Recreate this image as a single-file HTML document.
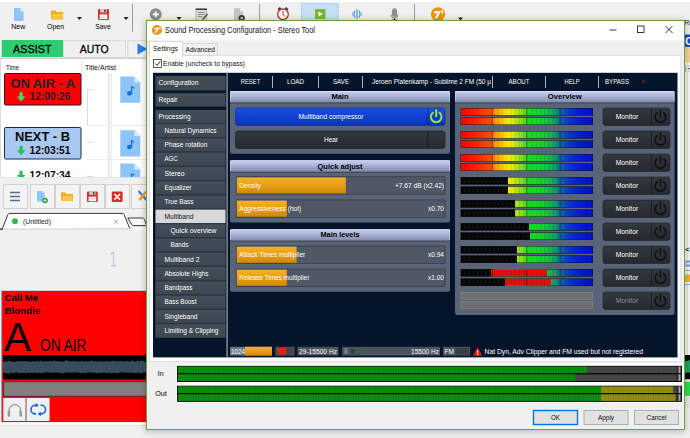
<!DOCTYPE html><html><head><meta charset="utf-8"><title>Sound Processing Configuration - Stereo Tool</title><style>html,body{margin:0;padding:0;background:#f0f0f0;overflow:hidden}svg{display:block;font-family:"Liberation Sans",sans-serif}text{white-space:pre}</style></head><body><svg width="690" height="438" viewBox="0 0 690 438"><defs><linearGradient id="hdr" x1="0" y1="0" x2="0" y2="1"><stop offset="0" stop-color="#c9d1f2"/><stop offset="0.45" stop-color="#aab3d6"/><stop offset="1" stop-color="#7f88a8"/></linearGradient><linearGradient id="blue" x1="0" y1="0" x2="0" y2="1"><stop offset="0" stop-color="#1c50e2"/><stop offset="0.5" stop-color="#0e40d0"/><stop offset="1" stop-color="#0a34b8"/></linearGradient><linearGradient id="dark" x1="0" y1="0" x2="0" y2="1"><stop offset="0" stop-color="#33373f"/><stop offset="1" stop-color="#26292f"/></linearGradient><linearGradient id="org" x1="0" y1="0" x2="0" y2="1"><stop offset="0" stop-color="#f4b22a"/><stop offset="0.5" stop-color="#e89e14"/><stop offset="1" stop-color="#d08808"/></linearGradient><linearGradient id="sbtn" x1="0" y1="0" x2="0" y2="1"><stop offset="0" stop-color="#444f5a"/><stop offset="1" stop-color="#3c4751"/></linearGradient><linearGradient id="meter" gradientUnits="userSpaceOnUse" x1="461" y1="0" x2="592.5" y2="0"><stop offset="0.0" stop-color="#ff0000"/><stop offset="0.1" stop-color="#ff2000"/><stop offset="0.235" stop-color="#ff5400"/><stop offset="0.25" stop-color="#ff9000"/><stop offset="0.345" stop-color="#ffe400"/><stop offset="0.375" stop-color="#f4ec08"/><stop offset="0.41" stop-color="#c4e818"/><stop offset="0.45" stop-color="#90e020"/><stop offset="0.495" stop-color="#5ce020"/><stop offset="0.505" stop-color="#18e020"/><stop offset="0.62" stop-color="#18d030"/><stop offset="0.7" stop-color="#14a860"/><stop offset="0.745" stop-color="#108088"/><stop offset="0.755" stop-color="#1068a8"/><stop offset="0.82" stop-color="#0a38cc"/><stop offset="0.9" stop-color="#061cd8"/><stop offset="1.0" stop-color="#0410c8"/></linearGradient><filter id="sh" x="-5%" y="-5%" width="110%" height="110%"><feGaussianBlur stdDeviation="3.200"/></filter></defs><rect x="0" y="0" width="690" height="438" fill="#f0f0f0"/><rect x="0" y="0" width="690" height="2" fill="#ffffff"/><path d="M14 8h6l3.5 3.5v9.5h-9.5z" fill="#8cc4f6"/><path d="M20 8l3.5 3.5h-3.5z" fill="#c8e4fb"/><text x="18.2" y="28.7" font-size="7.5" fill="#000" text-anchor="middle" textLength="14" lengthAdjust="spacingAndGlyphs">New</text><path d="M51 10.5h4.5l1.2 1.5h6.3v7.5h-12z" fill="#f5a623"/><path d="M52.5 13.5h11l-1.5 6h-11z" fill="#ffc24a"/><text x="55.5" y="28.7" font-size="7.5" fill="#000" text-anchor="middle" textLength="17" lengthAdjust="spacingAndGlyphs">Open</text><path d="M77 17h5l-2.5 3z" fill="#222"/><rect x="98" y="9" width="11" height="11" fill="#e02828" rx="1.2"/><rect x="100.2" y="9" width="6.6" height="3.6" fill="#c8ccd4"/><rect x="104.2" y="9.5" width="1.5" height="2.6" fill="#3a3a44"/><rect x="99.6" y="14.3" width="7.8" height="4.8" fill="#fff"/><rect x="100.6" y="15.6" width="5.8" height="0.7" fill="#c8c8c8"/><rect x="100.6" y="17.1" width="5.8" height="0.7" fill="#c8c8c8"/><text x="103" y="28.7" font-size="7.5" fill="#000" text-anchor="middle" textLength="15.5" lengthAdjust="spacingAndGlyphs">Save</text><path d="M123.5 17h5l-2.5 3z" fill="#222"/><line x1="132.5" y1="4" x2="132.5" y2="32" stroke="#9a9a9a" stroke-width="1" /><circle cx="155.700" cy="14.300" r="6" fill="#8c8c8c"/><path d="M152.700 14.300h6M155.700 11.300v6" fill="none" stroke="#fff" stroke-width="1.7"/><path d="M176.5 17h5l-2.5 3z" fill="#222"/><rect x="196" y="9" width="10.5" height="11.5" fill="#dcdcdc" stroke="#9a9a9a" stroke-width="0.7"/><rect x="195.7" y="8.5" width="11.2" height="1.5" fill="#3a3a3a"/><path d="M198 12.5h6.5M198 14.5h6.5M198 16.5h4" fill="none" stroke="#7a7a7a" stroke-width="0.8"/><path d="M202.5 19.5l5-5.500" fill="none" stroke="#5a5a5a" stroke-width="1.7"/><path d="M234 8.3h6l3 3v9h-9z" fill="#c4c4c4"/><path d="M240 8.3l3 3h-3z" fill="#eeeeee"/><circle cx="241.700" cy="18.200" r="3.100" fill="#333"/><path d="M240.400 16.900l2.600 2.600M243 16.900l-2.600 2.600" fill="none" stroke="#fff" stroke-width="0.9"/><line x1="259.6" y1="4" x2="259.6" y2="32" stroke="#9a9a9a" stroke-width="1" /><path d="M278.300 9.800l2.200-2.200M287.700 9.800l-2.200-2.200" fill="none" stroke="#333" stroke-width="2"/><circle cx="283" cy="14.300" r="5.300" fill="#fff" stroke="#cc2222" stroke-width="1.300"/><path d="M283 11v3.500l1.800 2" fill="none" stroke="#333" stroke-width="0.9"/><rect x="301.3" y="3.5" width="37" height="36" fill="#c6dff4" stroke="#8fc1ea" stroke-width="1" stroke-dasharray="1.500 1"/><rect x="315" y="9" width="10.5" height="10" fill="#79b82c" rx="0.8"/><path d="M318.500 11.500l4.200 2.500-4.200 2.500z" fill="#fff"/><path d="M357 9.300v9.600" fill="none" stroke="#3f94ea" stroke-width="1.2"/><path d="M355 10.500q-2 3.600 0 7.200M359 10.500q2 3.600 0 7.200" fill="none" stroke="#4a9bec" stroke-width="1.1"/><path d="M353.200 12q-1.300 2.100 0 4.200M360.800 12q1.300 2.100 0 4.200" fill="none" stroke="#6aaef0" stroke-width="1"/><rect x="392" y="8.3" width="5" height="8.7" fill="#8e8e8e" rx="2.5"/><path d="M391 14.500a3.500 3.500 0 0 0 7 0" fill="none" stroke="#6a6a6a" stroke-width="0.8"/><path d="M394.500 18v2M391.500 20h6" fill="none" stroke="#333" stroke-width="1"/><line x1="414.5" y1="4" x2="414.5" y2="32" stroke="#9a9a9a" stroke-width="1" /><circle cx="438" cy="14.200" r="7" fill="#ee920e"/><path d="M434.200 12.200h4.800l-3 6" fill="none" stroke="#fff" stroke-width="2.1"/><path d="M441.700 10.300l0.800 3.200" fill="none" stroke="#fff" stroke-width="1.5"/><path d="M458 17.5h5l-2.5 3z" fill="#222"/><rect x="1.8" y="40" width="61.4" height="17" fill="#2ecc71"/><text x="32.3" y="52.5" font-size="11.7" fill="#000" text-anchor="middle" textLength="38.6" lengthAdjust="spacingAndGlyphs" stroke="#000" stroke-width="0.300">ASSIST</text><rect x="63.5" y="40.5" width="62" height="17" fill="#f0f0f0" stroke="#dadada" stroke-width="1"/><text x="94.2" y="52.5" font-size="11.7" fill="#000" text-anchor="middle" textLength="28.8" lengthAdjust="spacingAndGlyphs" stroke="#000" stroke-width="0.300">AUTO</text><rect x="127.8" y="40.5" width="40" height="17" fill="#f0f0f0" stroke="#dadada" stroke-width="1"/><path d="M137.5 43.5l10 5.5-10 5.5z" fill="#1e80e6"/><rect x="0" y="58.5" width="150" height="1.2" fill="#b0b0b0"/><rect x="1" y="59" width="150" height="118" fill="#ffffff"/><rect x="0" y="59" width="1" height="120" fill="#dcdcdc"/><text x="6" y="70" font-size="7.5" fill="#111" textLength="13" lengthAdjust="spacingAndGlyphs">Time</text><text x="85" y="70" font-size="7.5" fill="#111" textLength="31" lengthAdjust="spacingAndGlyphs">Title/Artist</text><line x1="81.8" y1="60" x2="81.8" y2="73" stroke="#e0e0e0" stroke-width="1" /><rect x="108.5" y="73" width="3.5" height="106" fill="#f1f1f1"/><line x1="108.5" y1="73" x2="108.5" y2="178" stroke="#e6e6e6" stroke-width="1" /><line x1="87" y1="125.5" x2="150" y2="125.5" stroke="#ececec" stroke-width="1" /><line x1="87" y1="159.5" x2="150" y2="159.5" stroke="#ececec" stroke-width="1" /><line x1="87" y1="89.5" x2="93" y2="89.5" stroke="#d8d8d8" stroke-width="1" /><line x1="87" y1="142.5" x2="93" y2="142.5" stroke="#d8d8d8" stroke-width="1" /><line x1="87" y1="176.5" x2="93" y2="176.5" stroke="#d8d8d8" stroke-width="1" /><line x1="87.5" y1="89" x2="87.5" y2="125" stroke="#dcdcdc" stroke-width="1" /><clipPath id="listclip"><rect x="0" y="59" width="150" height="118"/></clipPath><g clip-path="url(#listclip)"><path d="M120.3 76.5h14l6 6v20.3h-20z" fill="#8ec5f7"/><path d="M134.3 76.5l6 6h-6z" fill="#d4eafd"/><ellipse cx="129.6" cy="93.3" rx="2.600" ry="2.300" fill="#1a6fe0"/><path d="M131.6 93.3v-6.300l2.800 1.200" fill="none" stroke="#1a6fe0" stroke-width="1.3"/><path d="M120.3 130.3h14l6 6v20.3h-20z" fill="#8ec5f7"/><path d="M134.3 130.3l6 6h-6z" fill="#d4eafd"/><ellipse cx="129.6" cy="147.10000000000002" rx="2.600" ry="2.300" fill="#1a6fe0"/><path d="M131.6 147.10000000000002v-6.300l2.800 1.200" fill="none" stroke="#1a6fe0" stroke-width="1.3"/><path d="M120.3 163.5h14l6 6v20.3h-20z" fill="#8ec5f7"/><path d="M134.3 163.5l6 6h-6z" fill="#d4eafd"/><ellipse cx="129.6" cy="180.3" rx="2.600" ry="2.300" fill="#1a6fe0"/><path d="M131.6 180.3v-6.300l2.800 1.200" fill="none" stroke="#1a6fe0" stroke-width="1.3"/><rect x="4.5" y="73.5" width="76.5" height="31.5" fill="#ff0000" rx="1.2" stroke="#3a1020" stroke-width="1"/><text x="42.8" y="87.5" font-size="12" fill="#18202e" font-weight="bold" text-anchor="middle" textLength="64.5" lengthAdjust="spacingAndGlyphs">ON AIR - A</text><text x="50" y="100" font-size="10" fill="#18202e" font-weight="bold" text-anchor="middle" textLength="41" lengthAdjust="spacingAndGlyphs">12:00:26</text><path d="M19.500 92.200v4.300h-2.700l4.300 4.900 4.300-4.900h-2.700v-4.300z" fill="#30e07c"/><rect x="4.5" y="127.5" width="76.5" height="31.5" fill="#a9c9f3" rx="1.2" stroke="#1c2c44" stroke-width="1"/><text x="42.5" y="141.2" font-size="12" fill="#0a0a0a" font-weight="bold" text-anchor="middle" textLength="55" lengthAdjust="spacingAndGlyphs">NEXT - B</text><text x="50" y="153.7" font-size="10" fill="#0a0a0a" font-weight="bold" text-anchor="middle" textLength="41" lengthAdjust="spacingAndGlyphs">12:03:51</text><path d="M19.500 146v4.300h-2.700l4.300 4.900 4.300-4.900h-2.700v-4.300z" fill="#22c254"/><text x="50" y="179.2" font-size="10" fill="#0a0a0a" font-weight="bold" text-anchor="middle" textLength="41" lengthAdjust="spacingAndGlyphs">12:07:34</text><path d="M19.400 170.800v4.300h-2.700l4.300 4.900 4.300-4.900h-2.700v-4.300z" fill="#22c254"/></g><rect x="0" y="177" width="150" height="1" fill="#e4e4e4"/><rect x="3.5" y="184.5" width="24" height="24" fill="#f3f3f3" stroke="#d0d0d0" stroke-width="1"/><rect x="30.5" y="184.5" width="24" height="24" fill="#f3f3f3" stroke="#d0d0d0" stroke-width="1"/><rect x="55.5" y="184.5" width="24" height="24" fill="#f3f3f3" stroke="#d0d0d0" stroke-width="1"/><rect x="80.5" y="184.5" width="24" height="24" fill="#f3f3f3" stroke="#d0d0d0" stroke-width="1"/><rect x="105.5" y="184.5" width="24" height="24" fill="#f3f3f3" stroke="#d0d0d0" stroke-width="1"/><rect x="131.5" y="184.5" width="24" height="24" fill="#f3f3f3" stroke="#d0d0d0" stroke-width="1"/><path d="M10 192.5h10M10 196.5h10M10 200.5h10" fill="none" stroke="#5b6b8c" stroke-width="1.4"/><path d="M37 191h5l2.5 2.5v8h-7.5z" fill="#8ec5f7"/><circle cx="45" cy="200.5" r="2.8" fill="#2e9e44"/><path d="M43.6 200.5h2.8M45 199.1v2.8" fill="none" stroke="#fff" stroke-width="0.8"/><path d="M61 192.5h4.5l1 1.5h6.5v7h-12z" fill="#f5a623"/><path d="M62.5 195.5h11l-1.5 5.5h-11z" fill="#ffc24a"/><rect x="87" y="191.5" width="10.8" height="10.5" fill="#e02828" rx="1"/><rect x="89.2" y="191.5" width="6.4" height="3.3" fill="#c8ccd4"/><rect x="93" y="192" width="1.4" height="2.4" fill="#3a3a44"/><rect x="88.6" y="196.6" width="7.6" height="4.6" fill="#fff"/><rect x="89.6" y="198" width="5.6" height="0.7" fill="#c8c8c8"/><rect x="111.8" y="191.5" width="10.8" height="10.5" fill="#e02828" rx="1"/><path d="M114.400 194l5.600 5.600M120 194l-5.600 5.600" fill="none" stroke="#fff" stroke-width="1.7"/><path d="M138.500 191l8 9" fill="none" stroke="#2f7de0" stroke-width="2.2"/><path d="M146 191.500l-6.500 8.500" fill="none" stroke="#f0a020" stroke-width="2.6"/><path d="M-1 229.300l3.300-0.500 5.700-14.400q0.500-1 2-1h112q1.500 0 2 1l5.500 13.500 2 1z" fill="#fff" stroke="#3a3a3a" stroke-width="1"/><rect x="3" y="228.3" width="147" height="1.5" fill="#fbfbfb"/><circle cx="15" cy="221.3" r="3" fill="#2dbe60"/><text x="23" y="224" font-size="7.5" fill="#222" textLength="28" lengthAdjust="spacingAndGlyphs">(Untitled)</text><path d="M114.2 219.8l3.6 3.6M117.8 219.8l-3.6 3.600" fill="none" stroke="#888" stroke-width="0.8"/><path d="M127.800 218h14.700q1.300 0 1.800 1.300l2.400 6.300h-13.300q-1.300 0-1.800-1.300z" fill="#fafafa" stroke="#3a3a3a" stroke-width="1"/><text x="113.3" y="265.6" font-size="20" fill="#a9bbdc" text-anchor="middle" textLength="8" lengthAdjust="spacingAndGlyphs" font-family="DejaVu Sans Light, DejaVu Sans, sans-serif" font-weight="200" stroke="#a9bbdc" stroke-width="0.250">1</text><rect x="1.3" y="290" width="149" height="132.3" fill="#7a8494"/><rect x="1.3" y="290" width="149" height="1" fill="#c8d0d8"/><rect x="2.2" y="291" width="148" height="131" fill="#ff0000"/><rect x="0" y="422.3" width="150" height="2.7" fill="#f9f9f9"/><rect x="0" y="425" width="150" height="0.8" fill="#dedede"/><text x="4.5" y="300.7" font-size="9.3" fill="#000" font-weight="bold" textLength="33.5" lengthAdjust="spacingAndGlyphs">Call Me</text><text x="4.5" y="313.7" font-size="9.3" fill="#000" font-weight="bold" textLength="36" lengthAdjust="spacingAndGlyphs">Blondie</text><text x="4" y="350.8" font-size="40" fill="#000" textLength="27" lengthAdjust="spacingAndGlyphs">A</text><text x="40" y="350.8" font-size="16.3" fill="#000" textLength="46.5" lengthAdjust="spacingAndGlyphs">ON AIR</text><rect x="3" y="355" width="147" height="24.5" fill="#000"/><path d="M3 361.4 L4 361.4 L5 361.5 L6 361.0 L7 361.9 L8 359.9 L9 361.1 L10 361.3 L11 361.4 L12 361.9 L13 361.2 L14 361.7 L15 361.9 L16 361.8 L17 361.0 L18 361.0 L19 361.0 L20 361.7 L21 361.1 L22 361.0 L23 361.9 L24 361.1 L25 361.0 L26 361.7 L27 361.0 L28 361.3 L29 361.5 L30 361.8 L31 361.6 L32 361.8 L33 360.9 L34 361.2 L35 361.1 L36 361.5 L37 361.8 L38 360.1 L39 361.5 L40 361.9 L41 359.8 L42 361.6 L43 361.4 L44 361.0 L45 361.6 L46 361.3 L47 361.3 L48 361.5 L49 361.0 L50 361.6 L51 361.3 L52 360.9 L53 361.6 L54 360.0 L55 361.1 L56 361.3 L57 361.1 L58 361.8 L59 361.0 L60 361.6 L61 361.4 L62 361.5 L63 361.9 L64 360.6 L65 361.2 L66 360.2 L67 359.8 L68 361.5 L69 361.6 L70 360.9 L71 361.2 L72 361.5 L73 360.6 L74 361.0 L75 361.3 L76 361.8 L77 361.6 L78 361.1 L79 361.4 L80 361.8 L81 361.5 L82 360.5 L83 361.2 L84 361.4 L85 361.8 L86 361.1 L87 361.5 L88 361.2 L89 361.1 L90 361.5 L91 360.3 L92 361.3 L93 360.4 L94 361.9 L95 361.0 L96 361.4 L97 361.8 L98 361.1 L99 361.3 L100 361.0 L101 361.4 L102 361.4 L103 361.5 L104 361.8 L105 361.8 L106 361.1 L107 361.1 L108 361.7 L109 361.3 L110 361.6 L111 361.4 L112 359.9 L113 361.5 L114 361.1 L115 360.6 L116 361.4 L117 361.4 L118 361.6 L119 361.6 L120 360.2 L121 361.6 L122 361.5 L123 361.2 L124 361.7 L125 361.6 L126 360.4 L127 360.9 L128 361.1 L129 361.6 L130 361.9 L131 360.7 L132 361.2 L133 360.1 L134 361.5 L135 361.9 L136 361.5 L137 361.1 L138 360.3 L139 361.4 L140 361.6 L141 360.0 L142 361.1 L143 360.4 L144 361.0 L145 361.9 L146 361.6 L147 361.5 L148 359.9 L149 361.3 L150 361.5 L150 372.4 L149 372.7 L148 372.7 L147 372.6 L146 372.2 L145 372.7 L144 372.8 L143 372.2 L142 372.8 L141 374.2 L140 372.9 L139 372.8 L138 372.3 L137 373.0 L136 373.2 L135 373.6 L134 372.2 L133 372.9 L132 373.1 L131 372.6 L130 372.5 L129 372.7 L128 372.5 L127 372.6 L126 372.9 L125 372.4 L124 372.3 L123 372.5 L122 372.2 L121 372.6 L120 372.3 L119 373.0 L118 373.0 L117 373.8 L116 372.9 L115 373.1 L114 372.4 L113 372.6 L112 374.3 L111 372.7 L110 372.2 L109 373.2 L108 372.4 L107 374.1 L106 372.3 L105 372.9 L104 372.5 L103 372.3 L102 373.0 L101 372.8 L100 372.9 L99 373.1 L98 372.5 L97 373.6 L96 373.0 L95 372.4 L94 372.9 L93 372.7 L92 372.6 L91 372.2 L90 372.7 L89 372.2 L88 372.4 L87 372.4 L86 372.9 L85 373.5 L84 372.4 L83 373.1 L82 372.4 L81 373.9 L80 373.1 L79 372.9 L78 372.2 L77 372.6 L76 372.5 L75 372.3 L74 372.6 L73 372.3 L72 372.8 L71 372.5 L70 372.5 L69 372.7 L68 372.4 L67 372.6 L66 372.4 L65 373.2 L64 372.5 L63 374.3 L62 372.9 L61 373.0 L60 372.9 L59 372.4 L58 372.6 L57 372.4 L56 372.9 L55 372.3 L54 372.9 L53 372.6 L52 372.7 L51 373.1 L50 372.5 L49 372.2 L48 372.6 L47 372.3 L46 372.3 L45 372.4 L44 372.5 L43 372.9 L42 373.2 L41 373.2 L40 372.5 L39 372.8 L38 373.0 L37 373.2 L36 372.6 L35 373.1 L34 372.6 L33 373.0 L32 372.8 L31 373.0 L30 373.0 L29 373.0 L28 372.2 L27 373.0 L26 374.1 L25 373.0 L24 372.3 L23 372.9 L22 373.0 L21 373.1 L20 372.6 L19 374.3 L18 372.2 L17 372.4 L16 372.2 L15 373.2 L14 372.4 L13 374.1 L12 372.4 L11 372.7 L10 372.7 L9 373.2 L8 373.9 L7 372.5 L6 373.7 L5 373.1 L4 373.0 L3 372.3z" fill="#3a4b5e"/><rect x="3.5" y="381.7" width="147" height="14.5" fill="#808080" stroke="#3a3038" stroke-width="0.9"/><rect x="3.3" y="398" width="22.3" height="23" fill="#f0f0f0"/><rect x="27" y="398" width="22.6" height="23" fill="#f0f0f0"/><rect x="25.6" y="398" width="1.4" height="23" fill="#a8a0a0"/><path d="M9 415.5v-5a5.800 5.800 0 0 1 11.600 0v5" fill="none" stroke="#9a9a9a" stroke-width="1.3"/><rect x="7.6" y="410.5" width="2.6" height="6.3" fill="#9a9a9a" rx="1"/><rect x="19.4" y="410.5" width="2.6" height="6.3" fill="#9a9a9a" rx="1"/><path d="M36.300 405.300h-1a4.300 4.300 0 0 0 0 8.600h0.800M40.300 413.900h1a4.300 4.300 0 0 0 0-8.600h-0.800" fill="none" stroke="#1565e0" stroke-width="1.6"/><path d="M35.800 403l3 2.300-3 2.300zM40.800 416.200l-3-2.300 3-2.300z" fill="#1565e0"/><rect x="685" y="2" width="5" height="436" fill="#f0f0f0"/><text x="684.3" y="25.3" font-size="7" fill="#222">Re</text><rect x="685" y="34.5" width="5" height="12.5" fill="#1c4fb4"/><text x="685.3" y="45" font-size="10.5" fill="#fff" font-weight="bold">C</text><rect x="685" y="47.3" width="5" height="15.2" fill="#f2d294"/><rect x="685" y="63" width="5" height="292" fill="#f7f7f7"/><rect x="685.5" y="66" width="5" height="5" fill="#fff" stroke="#9a9a9a" stroke-width="0.6"/><rect x="686.5" y="68" width="3" height="1.2" fill="#333"/><rect x="687" y="63" width="1" height="292" fill="#e2e2e2"/><text x="685.3" y="252" font-size="7.5" fill="#222" font-weight="bold">&lt;</text><rect x="685.5" y="260.5" width="4.5" height="6.2" fill="#7f9ce0"/><rect x="686.5" y="262.5" width="3.5" height="2" fill="#e8eefc"/><rect x="685" y="270" width="5" height="1" fill="#9aa8d0"/><rect x="685" y="274.5" width="5" height="7.5" fill="#f4b030"/><rect x="685" y="284" width="5" height="1" fill="#9aa8d0"/><rect x="685" y="355" width="5" height="24.3" fill="#0a0a0a"/><path d="M685 362l1-1.500 1.500 1 1.500-1.500 1 0.500v11.500l-1.500 1-1-1-1.500 1.500-1-1z" fill="#1fa060"/><rect x="685" y="381.7" width="5" height="14.2" fill="#22e044"/><rect x="685" y="396" width="5" height="12" fill="#e6e6e6"/><rect x="145" y="20" width="541" height="412" fill="#000" filter="url(#sh)" fill-opacity="0.220"/><rect x="146.5" y="20.5" width="538" height="409" fill="#f0f0f0" stroke="#6f9f44" stroke-width="1"/><rect x="147" y="21" width="537" height="19.3" fill="#ffffff"/><circle cx="157" cy="30" r="5.100" fill="#f09410"/><path d="M154.300 28.500h3.400l-2.200 4.300" fill="none" stroke="#fff" stroke-width="1.6"/><path d="M159.700 27.200l0.600 2.300" fill="none" stroke="#fff" stroke-width="1.1"/><text x="165" y="33.3" font-size="8.6" fill="#111" textLength="150" lengthAdjust="spacingAndGlyphs">Sound Processing Configuration - Stereo Tool</text><line x1="609.5" y1="30" x2="616.5" y2="30" stroke="#222" stroke-width="0.9" /><rect x="637.5" y="26" width="6.5" height="6.5" fill="none" stroke="#222" stroke-width="0.9"/><path d="M665.500 26l7 7M672.500 26l-7 7" fill="none" stroke="#222" stroke-width="0.9"/><rect x="149.5" y="55.5" width="531.3" height="306" fill="#ffffff" stroke="#e0e0e0" stroke-width="1"/><rect x="176.2" y="363.8" width="506.3" height="39" fill="#ffffff"/><rect x="149.5" y="41.5" width="33" height="15" fill="#ffffff" stroke="#dadada" stroke-width="1"/><rect x="150" y="54" width="32" height="3" fill="#ffffff"/><rect x="182.5" y="43.5" width="35" height="12" fill="#f0f0f0" stroke="#dadada" stroke-width="1"/><text x="153" y="51" font-size="7.5" fill="#111" textLength="25" lengthAdjust="spacingAndGlyphs">Settings</text><text x="185.5" y="52" font-size="7.5" fill="#111" textLength="29.5" lengthAdjust="spacingAndGlyphs">Advanced</text><rect x="153.5" y="59.5" width="8" height="8" fill="#fff" stroke="#333" stroke-width="0.8"/><path d="M155.200 63.500l1.900 2 3.200-4.200" fill="none" stroke="#111" stroke-width="0.9"/><text x="163" y="66.3" font-size="7.5" fill="#111" textLength="82" lengthAdjust="spacingAndGlyphs">Enable (uncheck to bypass)</text><rect x="153" y="72.8" width="524.5" height="284.6" fill="#04142a"/><rect x="226.3" y="72.8" width="1.6" height="284.6" fill="#7a8290"/><rect x="155.5" y="110" width="70" height="228" fill="#2a333d"/><rect x="155.5" y="76" width="70" height="14.3" fill="url(#sbtn)" stroke="#2c353f" stroke-width="0.5"/><text x="158.5" y="85.45" font-size="7.3" fill="#fff" textLength="40" lengthAdjust="spacingAndGlyphs">Configuration</text><rect x="155.5" y="93.1" width="70" height="13.6" fill="url(#sbtn)" stroke="#2c353f" stroke-width="0.5"/><text x="158.5" y="102.2" font-size="7.3" fill="#fff" textLength="19" lengthAdjust="spacingAndGlyphs">Repair</text><rect x="155.5" y="110" width="70" height="13.4" fill="url(#sbtn)" stroke="#2c353f" stroke-width="0.5"/><text x="158.5" y="119.0" font-size="7.3" fill="#fff" textLength="32" lengthAdjust="spacingAndGlyphs">Processing</text><rect x="155.5" y="123.9" width="70" height="13.4" fill="url(#sbtn)" stroke="#2c353f" stroke-width="0.5"/><text x="164.5" y="132.9" font-size="7.3" fill="#fff" textLength="52" lengthAdjust="spacingAndGlyphs">Natural Dynamics</text><rect x="155.5" y="138.19" width="70" height="13.4" fill="url(#sbtn)" stroke="#2c353f" stroke-width="0.5"/><text x="164.5" y="147.19" font-size="7.3" fill="#fff" textLength="43" lengthAdjust="spacingAndGlyphs">Phase rotation</text><rect x="155.5" y="152.48" width="70" height="13.4" fill="url(#sbtn)" stroke="#2c353f" stroke-width="0.5"/><text x="164.5" y="161.48" font-size="7.3" fill="#fff" textLength="13" lengthAdjust="spacingAndGlyphs">AGC</text><rect x="155.5" y="166.77" width="70" height="13.4" fill="url(#sbtn)" stroke="#2c353f" stroke-width="0.5"/><text x="164.5" y="175.77" font-size="7.3" fill="#fff" textLength="20" lengthAdjust="spacingAndGlyphs">Stereo</text><rect x="155.5" y="181.06" width="70" height="13.4" fill="url(#sbtn)" stroke="#2c353f" stroke-width="0.5"/><text x="164.5" y="190.06" font-size="7.3" fill="#fff" textLength="27" lengthAdjust="spacingAndGlyphs">Equalizer</text><rect x="155.5" y="195.35" width="70" height="13.4" fill="url(#sbtn)" stroke="#2c353f" stroke-width="0.5"/><text x="164.5" y="204.35" font-size="7.3" fill="#fff" textLength="29" lengthAdjust="spacingAndGlyphs">True Bass</text><rect x="155.5" y="209.64" width="70" height="13.4" fill="#d8d8d8"/><text x="164.5" y="218.64" font-size="7.3" fill="#111" textLength="29" lengthAdjust="spacingAndGlyphs">Multiband</text><rect x="155.5" y="223.93" width="70" height="13.4" fill="url(#sbtn)" stroke="#2c353f" stroke-width="0.5"/><text x="170.5" y="232.93" font-size="7.3" fill="#fff" textLength="46" lengthAdjust="spacingAndGlyphs">Quick overview</text><rect x="155.5" y="238.22" width="70" height="13.4" fill="url(#sbtn)" stroke="#2c353f" stroke-width="0.5"/><text x="170.5" y="247.22" font-size="7.3" fill="#fff" textLength="18" lengthAdjust="spacingAndGlyphs">Bands</text><rect x="155.5" y="252.51" width="70" height="13.4" fill="url(#sbtn)" stroke="#2c353f" stroke-width="0.5"/><text x="164.5" y="261.51" font-size="7.3" fill="#fff" textLength="35" lengthAdjust="spacingAndGlyphs">Multiband 2</text><rect x="155.5" y="266.8" width="70" height="13.4" fill="url(#sbtn)" stroke="#2c353f" stroke-width="0.5"/><text x="164.5" y="275.8" font-size="7.3" fill="#fff" textLength="44" lengthAdjust="spacingAndGlyphs">Absolute Highs</text><rect x="155.5" y="281.09" width="70" height="13.4" fill="url(#sbtn)" stroke="#2c353f" stroke-width="0.5"/><text x="164.5" y="290.09" font-size="7.3" fill="#fff" textLength="28" lengthAdjust="spacingAndGlyphs">Bandpass</text><rect x="155.5" y="295.38" width="70" height="13.4" fill="url(#sbtn)" stroke="#2c353f" stroke-width="0.5"/><text x="164.5" y="304.38" font-size="7.3" fill="#fff" textLength="32" lengthAdjust="spacingAndGlyphs">Bass Boost</text><rect x="155.5" y="309.67" width="70" height="13.4" fill="url(#sbtn)" stroke="#2c353f" stroke-width="0.5"/><text x="164.5" y="318.67" font-size="7.3" fill="#fff" textLength="33" lengthAdjust="spacingAndGlyphs">Singleband</text><rect x="155.5" y="323.96" width="70" height="13.4" fill="url(#sbtn)" stroke="#2c353f" stroke-width="0.5"/><text x="164.5" y="332.96" font-size="7.3" fill="#fff" textLength="54" lengthAdjust="spacingAndGlyphs">Limiting &amp; Clipping</text><text x="250.5" y="84" font-size="7.3" fill="#fff" text-anchor="middle" textLength="19.5" lengthAdjust="spacingAndGlyphs">RESET</text><line x1="272.5" y1="76" x2="272.5" y2="88" stroke="#b0b4bc" stroke-width="1" /><text x="295.5" y="84" font-size="7.3" fill="#fff" text-anchor="middle" textLength="17" lengthAdjust="spacingAndGlyphs">LOAD</text><line x1="318.5" y1="76" x2="318.5" y2="88" stroke="#b0b4bc" stroke-width="1" /><text x="341" y="84" font-size="7.3" fill="#fff" text-anchor="middle" textLength="16" lengthAdjust="spacingAndGlyphs">SAVE</text><line x1="362.5" y1="76" x2="362.5" y2="88" stroke="#b0b4bc" stroke-width="1" /><text x="372" y="84" font-size="7.3" fill="#fff" textLength="119" lengthAdjust="spacingAndGlyphs">Jeroen Platenkamp - Sublime 2 FM (50 µ</text><line x1="492.5" y1="76" x2="492.5" y2="88" stroke="#b0b4bc" stroke-width="1" /><text x="519" y="84" font-size="7.3" fill="#fff" text-anchor="middle" textLength="21" lengthAdjust="spacingAndGlyphs">ABOUT</text><line x1="545.5" y1="76" x2="545.5" y2="88" stroke="#b0b4bc" stroke-width="1" /><text x="572" y="84" font-size="7.3" fill="#fff" text-anchor="middle" textLength="15" lengthAdjust="spacingAndGlyphs">HELP</text><line x1="598.5" y1="76" x2="598.5" y2="88" stroke="#b0b4bc" stroke-width="1" /><text x="617" y="84" font-size="7.3" fill="#fff" text-anchor="middle" textLength="24" lengthAdjust="spacingAndGlyphs">BYPASS</text><circle cx="643.5" cy="81.5" r="2" fill="#3a2420"/><rect x="230" y="91" width="220" height="62.7" fill="#596478" rx="2"/><rect x="230" y="91" width="220" height="11.5" fill="url(#hdr)" rx="1.5"/><rect x="230.3" y="91.2" width="219.4" height="0.7" fill="#e8ecff" fill-opacity="0.8"/><rect x="230" y="91.5" width="0.7" height="10.5" fill="#e8ecff" fill-opacity="0.6"/><rect x="449.3" y="91.5" width="0.7" height="10.5" fill="#e8ecff" fill-opacity="0.6"/><rect x="230" y="102.5" width="220" height="1" fill="#3c4658"/><text x="340.0" y="99.2" font-size="7.8" fill="#000" font-weight="bold" text-anchor="middle" textLength="17" lengthAdjust="spacingAndGlyphs">Main</text><rect x="230" y="160.3" width="220" height="62.3" fill="#596478" rx="2"/><rect x="230" y="160.3" width="220" height="11.5" fill="url(#hdr)" rx="1.5"/><rect x="230.3" y="160.5" width="219.4" height="0.7" fill="#e8ecff" fill-opacity="0.8"/><rect x="230" y="160.8" width="0.7" height="10.5" fill="#e8ecff" fill-opacity="0.6"/><rect x="449.3" y="160.8" width="0.7" height="10.5" fill="#e8ecff" fill-opacity="0.6"/><rect x="230" y="171.8" width="220" height="1" fill="#3c4658"/><text x="340.0" y="168.5" font-size="7.8" fill="#000" font-weight="bold" text-anchor="middle" textLength="45" lengthAdjust="spacingAndGlyphs">Quick adjust</text><rect x="230" y="229.2" width="220" height="62.5" fill="#596478" rx="2"/><rect x="230" y="229.2" width="220" height="11.5" fill="url(#hdr)" rx="1.5"/><rect x="230.3" y="229.39999999999998" width="219.4" height="0.7" fill="#e8ecff" fill-opacity="0.8"/><rect x="230" y="229.7" width="0.7" height="10.5" fill="#e8ecff" fill-opacity="0.6"/><rect x="449.3" y="229.7" width="0.7" height="10.5" fill="#e8ecff" fill-opacity="0.6"/><rect x="230" y="240.7" width="220" height="1" fill="#3c4658"/><text x="340.0" y="237.39999999999998" font-size="7.8" fill="#000" font-weight="bold" text-anchor="middle" textLength="39" lengthAdjust="spacingAndGlyphs">Main levels</text><rect x="455" y="91" width="219.5" height="224" fill="#596478" rx="2"/><rect x="455" y="91" width="219.5" height="11.5" fill="url(#hdr)" rx="1.5"/><rect x="455.3" y="91.2" width="218.9" height="0.7" fill="#e8ecff" fill-opacity="0.8"/><rect x="455" y="91.5" width="0.7" height="10.5" fill="#e8ecff" fill-opacity="0.6"/><rect x="673.8" y="91.5" width="0.7" height="10.5" fill="#e8ecff" fill-opacity="0.6"/><rect x="455" y="102.5" width="219.5" height="1" fill="#3c4658"/><text x="564.75" y="99.2" font-size="7.8" fill="#000" font-weight="bold" text-anchor="middle" textLength="34" lengthAdjust="spacingAndGlyphs">Overview</text><rect x="235.5" y="108" width="209.5" height="17.5" fill="url(#blue)" rx="2.5" stroke="#0a2a90" stroke-width="0.6"/><line x1="427.8" y1="108.5" x2="427.8" y2="125" stroke="#0a2a90" stroke-width="0.7" /><text x="331" y="118.5" font-size="7.3" fill="#fff" text-anchor="middle" textLength="65" lengthAdjust="spacingAndGlyphs">Multiband compressor</text><g stroke="#9ce42a" stroke-width="2" fill="none" stroke-linecap="round"><path d="M432.900 112.800a5.300 5.300 0 1 0 6.600 0"/><path d="M436.200 110.300v6"/></g><rect x="235.5" y="131" width="209.5" height="17.5" fill="url(#dark)" rx="2.5" stroke="#1a1c20" stroke-width="0.6"/><line x1="427.8" y1="131.5" x2="427.8" y2="148" stroke="#14161a" stroke-width="0.7" /><text x="331" y="141.6" font-size="7.3" fill="#fff" text-anchor="middle" textLength="14" lengthAdjust="spacingAndGlyphs">Hear</text><rect x="236.2" y="176.7" width="208.8" height="17.5" fill="#4f5864" stroke="#333a44" stroke-width="0.7"/><rect x="236.8" y="177.39999999999998" width="109" height="16.1" fill="url(#org)"/><text x="239.3" y="187.89999999999998" font-size="7.3" fill="#fff" textLength="21.5" lengthAdjust="spacingAndGlyphs">Density</text><text x="444" y="187.89999999999998" font-size="7.3" fill="#fff" text-anchor="end" textLength="49" lengthAdjust="spacingAndGlyphs">+7.67 dB (x2.42)</text><rect x="236.2" y="199.9" width="208.8" height="17.5" fill="#4f5864" stroke="#333a44" stroke-width="0.7"/><rect x="236.8" y="200.6" width="50" height="16.1" fill="url(#org)"/><text x="239.3" y="211.1" font-size="7.3" fill="#fff" textLength="62" lengthAdjust="spacingAndGlyphs">Aggressiveness (hot)</text><text x="444" y="211.1" font-size="7.3" fill="#fff" text-anchor="end" textLength="16" lengthAdjust="spacingAndGlyphs">x0.70</text><rect x="236.2" y="246.0" width="208.8" height="17.5" fill="#4f5864" stroke="#333a44" stroke-width="0.7"/><rect x="236.8" y="246.7" width="59.8" height="16.1" fill="url(#org)"/><text x="239.3" y="257.2" font-size="7.3" fill="#fff" textLength="66" lengthAdjust="spacingAndGlyphs">Attack Times multiplier</text><text x="444" y="257.2" font-size="7.3" fill="#fff" text-anchor="end" textLength="16" lengthAdjust="spacingAndGlyphs">x0.94</text><rect x="236.2" y="269.0" width="208.8" height="17.5" fill="#4f5864" stroke="#333a44" stroke-width="0.7"/><rect x="236.8" y="269.7" width="50" height="16.1" fill="url(#org)"/><text x="239.3" y="280.2" font-size="7.3" fill="#fff" textLength="70" lengthAdjust="spacingAndGlyphs">Release Times multiplier</text><text x="444" y="280.2" font-size="7.3" fill="#fff" text-anchor="end" textLength="16" lengthAdjust="spacingAndGlyphs">x1.00</text><pattern id="seg" x="461" y="0" width="4.200" height="8" patternUnits="userSpaceOnUse"><rect x="3.500" y="0" width="0.700" height="8" fill="#000" fill-opacity="0.160"/></pattern><pattern id="segw" x="461" y="0" width="4.200" height="8" patternUnits="userSpaceOnUse"><rect x="3.500" y="0" width="0.700" height="8" fill="#fff" fill-opacity="0.130"/></pattern><rect x="460.5" y="108.0" width="132.5" height="7.7" fill="#14161c"/><rect x="461" y="108.5" width="131.5" height="6.7" fill="url(#meter)"/><rect x="461" y="108.5" width="131.5" height="6.7" fill="url(#seg)"/><rect x="492.0" y="108.5" width="1" height="6.7" fill="#000" fill-opacity="0.450"/><rect x="525.8" y="108.5" width="1" height="6.7" fill="#000" fill-opacity="0.450"/><rect x="559.5" y="108.5" width="1" height="6.7" fill="#000" fill-opacity="0.450"/><rect x="460.5" y="117.3" width="132.5" height="7.7" fill="#14161c"/><rect x="461" y="117.8" width="131.5" height="6.7" fill="url(#meter)"/><rect x="461" y="117.8" width="131.5" height="6.7" fill="url(#seg)"/><rect x="492.0" y="117.8" width="1" height="6.7" fill="#000" fill-opacity="0.450"/><rect x="525.8" y="117.8" width="1" height="6.7" fill="#000" fill-opacity="0.450"/><rect x="559.5" y="117.8" width="1" height="6.7" fill="#000" fill-opacity="0.450"/><rect x="603" y="108" width="67" height="17.5" fill="url(#dark)" rx="2.5" stroke="#1c1e24" stroke-width="0.6"/><line x1="651.5" y1="108.5" x2="651.5" y2="125" stroke="#16181c" stroke-width="0.7" /><text x="627" y="118.7" font-size="7.3" fill="#fff" text-anchor="middle" textLength="22.5" lengthAdjust="spacingAndGlyphs">Monitor</text><g stroke="#121418" stroke-width="1.800" fill="none" stroke-linecap="round"><path d="M657.100 112.8a5.300 5.300 0 1 0 6.600 0"/><path d="M660.400 110.3v6"/></g><rect x="460.5" y="131.0" width="132.5" height="7.7" fill="#14161c"/><rect x="461" y="131.5" width="131.5" height="6.7" fill="url(#meter)"/><rect x="461" y="131.5" width="131.5" height="6.7" fill="url(#seg)"/><rect x="492.0" y="131.5" width="1" height="6.7" fill="#000" fill-opacity="0.450"/><rect x="525.8" y="131.5" width="1" height="6.7" fill="#000" fill-opacity="0.450"/><rect x="559.5" y="131.5" width="1" height="6.7" fill="#000" fill-opacity="0.450"/><rect x="460.5" y="140.3" width="132.5" height="7.7" fill="#14161c"/><rect x="461" y="140.8" width="131.5" height="6.7" fill="url(#meter)"/><rect x="461" y="140.8" width="131.5" height="6.7" fill="url(#seg)"/><rect x="492.0" y="140.8" width="1" height="6.7" fill="#000" fill-opacity="0.450"/><rect x="525.8" y="140.8" width="1" height="6.7" fill="#000" fill-opacity="0.450"/><rect x="559.5" y="140.8" width="1" height="6.7" fill="#000" fill-opacity="0.450"/><rect x="603" y="131" width="67" height="17.5" fill="url(#dark)" rx="2.5" stroke="#1c1e24" stroke-width="0.6"/><line x1="651.5" y1="131.5" x2="651.5" y2="148" stroke="#16181c" stroke-width="0.7" /><text x="627" y="141.7" font-size="7.3" fill="#fff" text-anchor="middle" textLength="22.5" lengthAdjust="spacingAndGlyphs">Monitor</text><g stroke="#121418" stroke-width="1.800" fill="none" stroke-linecap="round"><path d="M657.100 135.8a5.300 5.300 0 1 0 6.600 0"/><path d="M660.400 133.3v6"/></g><rect x="460.5" y="154.0" width="132.5" height="7.7" fill="#14161c"/><rect x="461" y="154.5" width="131.5" height="6.7" fill="url(#meter)"/><rect x="461" y="154.5" width="131.5" height="6.7" fill="url(#seg)"/><rect x="492.0" y="154.5" width="1" height="6.7" fill="#000" fill-opacity="0.450"/><rect x="525.8" y="154.5" width="1" height="6.7" fill="#000" fill-opacity="0.450"/><rect x="559.5" y="154.5" width="1" height="6.7" fill="#000" fill-opacity="0.450"/><rect x="460.5" y="163.3" width="132.5" height="7.7" fill="#14161c"/><rect x="461" y="163.8" width="131.5" height="6.7" fill="url(#meter)"/><rect x="461" y="163.8" width="131.5" height="6.7" fill="url(#seg)"/><rect x="492.0" y="163.8" width="1" height="6.7" fill="#000" fill-opacity="0.450"/><rect x="525.8" y="163.8" width="1" height="6.7" fill="#000" fill-opacity="0.450"/><rect x="559.5" y="163.8" width="1" height="6.7" fill="#000" fill-opacity="0.450"/><rect x="603" y="154" width="67" height="17.5" fill="url(#dark)" rx="2.5" stroke="#1c1e24" stroke-width="0.6"/><line x1="651.5" y1="154.5" x2="651.5" y2="171" stroke="#16181c" stroke-width="0.7" /><text x="627" y="164.7" font-size="7.3" fill="#fff" text-anchor="middle" textLength="22.5" lengthAdjust="spacingAndGlyphs">Monitor</text><g stroke="#121418" stroke-width="1.800" fill="none" stroke-linecap="round"><path d="M657.100 158.8a5.300 5.300 0 1 0 6.600 0"/><path d="M660.400 156.3v6"/></g><rect x="460.5" y="177.0" width="132.5" height="7.7" fill="#14161c"/><rect x="508" y="177.5" width="84.5" height="6.7" fill="url(#meter)"/><rect x="461" y="177.5" width="47" height="6.7" fill="#050505"/><rect x="461" y="179.0" width="46.5" height="4" fill="url(#segw)"/><rect x="461" y="177.5" width="131.5" height="6.7" fill="url(#seg)"/><rect x="492.0" y="177.5" width="1" height="6.7" fill="#000" fill-opacity="0.450"/><rect x="525.8" y="177.5" width="1" height="6.7" fill="#000" fill-opacity="0.450"/><rect x="559.5" y="177.5" width="1" height="6.7" fill="#000" fill-opacity="0.450"/><rect x="460.5" y="186.3" width="132.5" height="7.7" fill="#14161c"/><rect x="508" y="186.8" width="84.5" height="6.7" fill="url(#meter)"/><rect x="461" y="186.8" width="47" height="6.7" fill="#050505"/><rect x="461" y="188.3" width="46.5" height="4" fill="url(#segw)"/><rect x="461" y="186.8" width="131.5" height="6.7" fill="url(#seg)"/><rect x="492.0" y="186.8" width="1" height="6.7" fill="#000" fill-opacity="0.450"/><rect x="525.8" y="186.8" width="1" height="6.7" fill="#000" fill-opacity="0.450"/><rect x="559.5" y="186.8" width="1" height="6.7" fill="#000" fill-opacity="0.450"/><rect x="603" y="177" width="67" height="17.5" fill="url(#dark)" rx="2.5" stroke="#1c1e24" stroke-width="0.6"/><line x1="651.5" y1="177.5" x2="651.5" y2="194" stroke="#16181c" stroke-width="0.7" /><text x="627" y="187.7" font-size="7.3" fill="#fff" text-anchor="middle" textLength="22.5" lengthAdjust="spacingAndGlyphs">Monitor</text><g stroke="#121418" stroke-width="1.800" fill="none" stroke-linecap="round"><path d="M657.100 181.8a5.300 5.300 0 1 0 6.600 0"/><path d="M660.400 179.3v6"/></g><rect x="460.5" y="200.0" width="132.5" height="7.7" fill="#14161c"/><rect x="515" y="200.5" width="77.5" height="6.7" fill="url(#meter)"/><rect x="461" y="200.5" width="54" height="6.7" fill="#050505"/><rect x="461" y="202.0" width="53.5" height="4" fill="url(#segw)"/><rect x="461" y="200.5" width="131.5" height="6.7" fill="url(#seg)"/><rect x="492.0" y="200.5" width="1" height="6.7" fill="#000" fill-opacity="0.450"/><rect x="525.8" y="200.5" width="1" height="6.7" fill="#000" fill-opacity="0.450"/><rect x="559.5" y="200.5" width="1" height="6.7" fill="#000" fill-opacity="0.450"/><rect x="460.5" y="209.3" width="132.5" height="7.7" fill="#14161c"/><rect x="515" y="209.8" width="77.5" height="6.7" fill="url(#meter)"/><rect x="461" y="209.8" width="54" height="6.7" fill="#050505"/><rect x="461" y="211.3" width="53.5" height="4" fill="url(#segw)"/><rect x="461" y="209.8" width="131.5" height="6.7" fill="url(#seg)"/><rect x="492.0" y="209.8" width="1" height="6.7" fill="#000" fill-opacity="0.450"/><rect x="525.8" y="209.8" width="1" height="6.7" fill="#000" fill-opacity="0.450"/><rect x="559.5" y="209.8" width="1" height="6.7" fill="#000" fill-opacity="0.450"/><rect x="603" y="200" width="67" height="17.5" fill="url(#dark)" rx="2.5" stroke="#1c1e24" stroke-width="0.6"/><line x1="651.5" y1="200.5" x2="651.5" y2="217" stroke="#16181c" stroke-width="0.7" /><text x="627" y="210.7" font-size="7.3" fill="#fff" text-anchor="middle" textLength="22.5" lengthAdjust="spacingAndGlyphs">Monitor</text><g stroke="#121418" stroke-width="1.800" fill="none" stroke-linecap="round"><path d="M657.100 204.8a5.300 5.300 0 1 0 6.600 0"/><path d="M660.400 202.3v6"/></g><rect x="460.5" y="223.0" width="132.5" height="7.7" fill="#14161c"/><rect x="529" y="223.5" width="63.5" height="6.7" fill="url(#meter)"/><rect x="461" y="223.5" width="68" height="6.7" fill="#050505"/><rect x="461" y="225.0" width="67.5" height="4" fill="url(#segw)"/><rect x="461" y="223.5" width="131.5" height="6.7" fill="url(#seg)"/><rect x="492.0" y="223.5" width="1" height="6.7" fill="#000" fill-opacity="0.450"/><rect x="525.8" y="223.5" width="1" height="6.7" fill="#000" fill-opacity="0.450"/><rect x="559.5" y="223.5" width="1" height="6.7" fill="#000" fill-opacity="0.450"/><rect x="460.5" y="232.3" width="132.5" height="7.7" fill="#14161c"/><rect x="530" y="232.8" width="62.5" height="6.7" fill="url(#meter)"/><rect x="461" y="232.8" width="69" height="6.7" fill="#050505"/><rect x="461" y="234.3" width="68.5" height="4" fill="url(#segw)"/><rect x="461" y="232.8" width="131.5" height="6.7" fill="url(#seg)"/><rect x="492.0" y="232.8" width="1" height="6.7" fill="#000" fill-opacity="0.450"/><rect x="525.8" y="232.8" width="1" height="6.7" fill="#000" fill-opacity="0.450"/><rect x="559.5" y="232.8" width="1" height="6.7" fill="#000" fill-opacity="0.450"/><rect x="603" y="223" width="67" height="17.5" fill="url(#dark)" rx="2.5" stroke="#1c1e24" stroke-width="0.6"/><line x1="651.5" y1="223.5" x2="651.5" y2="240" stroke="#16181c" stroke-width="0.7" /><text x="627" y="233.7" font-size="7.3" fill="#fff" text-anchor="middle" textLength="22.5" lengthAdjust="spacingAndGlyphs">Monitor</text><g stroke="#121418" stroke-width="1.800" fill="none" stroke-linecap="round"><path d="M657.100 227.8a5.300 5.300 0 1 0 6.600 0"/><path d="M660.400 225.3v6"/></g><rect x="460.5" y="246.0" width="132.5" height="7.7" fill="#14161c"/><rect x="517" y="246.5" width="75.5" height="6.7" fill="url(#meter)"/><rect x="461" y="246.5" width="56" height="6.7" fill="#050505"/><rect x="461" y="248.0" width="55.5" height="4" fill="url(#segw)"/><rect x="461" y="246.5" width="131.5" height="6.7" fill="url(#seg)"/><rect x="492.0" y="246.5" width="1" height="6.7" fill="#000" fill-opacity="0.450"/><rect x="525.8" y="246.5" width="1" height="6.7" fill="#000" fill-opacity="0.450"/><rect x="559.5" y="246.5" width="1" height="6.7" fill="#000" fill-opacity="0.450"/><rect x="460.5" y="255.3" width="132.5" height="7.7" fill="#14161c"/><rect x="517" y="255.8" width="75.5" height="6.7" fill="url(#meter)"/><rect x="461" y="255.8" width="56" height="6.7" fill="#050505"/><rect x="461" y="257.3" width="55.5" height="4" fill="url(#segw)"/><rect x="461" y="255.8" width="131.5" height="6.7" fill="url(#seg)"/><rect x="492.0" y="255.8" width="1" height="6.7" fill="#000" fill-opacity="0.450"/><rect x="525.8" y="255.8" width="1" height="6.7" fill="#000" fill-opacity="0.450"/><rect x="559.5" y="255.8" width="1" height="6.7" fill="#000" fill-opacity="0.450"/><rect x="603" y="246" width="67" height="17.5" fill="url(#dark)" rx="2.5" stroke="#1c1e24" stroke-width="0.6"/><line x1="651.5" y1="246.5" x2="651.5" y2="263" stroke="#16181c" stroke-width="0.7" /><text x="627" y="256.7" font-size="7.3" fill="#fff" text-anchor="middle" textLength="22.5" lengthAdjust="spacingAndGlyphs">Monitor</text><g stroke="#121418" stroke-width="1.800" fill="none" stroke-linecap="round"><path d="M657.100 250.8a5.300 5.300 0 1 0 6.600 0"/><path d="M660.400 248.3v6"/></g><rect x="460.5" y="269.0" width="132.5" height="7.7" fill="#14161c"/><rect x="491" y="269.5" width="101.5" height="6.7" fill="url(#meter)"/><rect x="491" y="269.5" width="56" height="6.7" fill="#e01010"/><rect x="461" y="269.5" width="30" height="6.7" fill="#050505"/><rect x="461" y="271.0" width="29.5" height="4" fill="url(#segw)"/><rect x="461" y="269.5" width="131.5" height="6.7" fill="url(#seg)"/><rect x="492.0" y="269.5" width="1" height="6.7" fill="#000" fill-opacity="0.450"/><rect x="525.8" y="269.5" width="1" height="6.7" fill="#000" fill-opacity="0.450"/><rect x="559.5" y="269.5" width="1" height="6.7" fill="#000" fill-opacity="0.450"/><rect x="460.5" y="278.3" width="132.5" height="7.7" fill="#14161c"/><rect x="505" y="278.8" width="87.5" height="6.7" fill="url(#meter)"/><rect x="505" y="278.8" width="46" height="6.7" fill="#e01010"/><rect x="461" y="278.8" width="44" height="6.7" fill="#050505"/><rect x="461" y="280.3" width="43.5" height="4" fill="url(#segw)"/><rect x="461" y="278.8" width="131.5" height="6.7" fill="url(#seg)"/><rect x="492.0" y="278.8" width="1" height="6.7" fill="#000" fill-opacity="0.450"/><rect x="525.8" y="278.8" width="1" height="6.7" fill="#000" fill-opacity="0.450"/><rect x="559.5" y="278.8" width="1" height="6.7" fill="#000" fill-opacity="0.450"/><rect x="603" y="269" width="67" height="17.5" fill="url(#dark)" rx="2.5" stroke="#1c1e24" stroke-width="0.6"/><line x1="651.5" y1="269.5" x2="651.5" y2="286" stroke="#16181c" stroke-width="0.7" /><text x="627" y="279.7" font-size="7.3" fill="#fff" text-anchor="middle" textLength="22.5" lengthAdjust="spacingAndGlyphs">Monitor</text><g stroke="#121418" stroke-width="1.800" fill="none" stroke-linecap="round"><path d="M657.100 273.8a5.300 5.300 0 1 0 6.600 0"/><path d="M660.400 271.3v6"/></g><rect x="461" y="292.5" width="131.5" height="6.7" fill="#6e6e6e" stroke="#8a8a8a" stroke-width="0.6"/><rect x="461" y="301.8" width="131.5" height="6.7" fill="#6e6e6e" stroke="#8a8a8a" stroke-width="0.6"/><rect x="603" y="292" width="67" height="17.5" fill="url(#dark)" rx="2.5" stroke="#1c1e24" stroke-width="0.6"/><line x1="651.5" y1="292.5" x2="651.5" y2="309" stroke="#16181c" stroke-width="0.7" /><text x="627" y="302.7" font-size="7.3" fill="#8a8e96" text-anchor="middle" textLength="22.5" lengthAdjust="spacingAndGlyphs">Monitor</text><g stroke="#121418" stroke-width="1.800" fill="none" stroke-linecap="round"><path d="M657.100 296.8a5.300 5.300 0 1 0 6.600 0"/><path d="M660.400 294.3v6"/></g><rect x="230" y="346.8" width="42" height="8.8" fill="#6a7480"/><rect x="245" y="346.8" width="27" height="8.8" fill="url(#org)"/><text x="231" y="354" font-size="7.3" fill="#fff" textLength="14" lengthAdjust="spacingAndGlyphs">1024</text><rect x="275.5" y="346.8" width="19" height="8.8" fill="#4a525e"/><rect x="278" y="348.0" width="8" height="6.4" fill="#e82010"/><rect x="286.3" y="348.0" width="6.5" height="6.4" fill="#4a4444"/><rect x="297.5" y="346.8" width="41" height="8.8" fill="#4a525e"/><text x="299" y="354" font-size="7.3" fill="#fff" textLength="38" lengthAdjust="spacingAndGlyphs">29-15500 Hz</text><rect x="342" y="346.8" width="98" height="8.8" fill="#4a525e"/><rect x="351" y="349" width="4" height="4.5" fill="#0c5a1c"/><rect x="344.5" y="348" width="3" height="6" fill="#78808a"/><text x="439" y="354" font-size="7.3" fill="#fff" text-anchor="end" textLength="28" lengthAdjust="spacingAndGlyphs">15500 Hz</text><rect x="443" y="346.8" width="27" height="8.8" fill="#4a525e"/><text x="444.5" y="354" font-size="7.3" fill="#fff" textLength="9.5" lengthAdjust="spacingAndGlyphs">FM</text><rect x="455.5" y="348.0" width="13.5" height="6.4" fill="#3a3e46"/><path d="M473 355.800l4.600-8.500 4.600 8.500z" fill="#e01818"/><text x="477.6" y="355.2" font-size="6.5" fill="#fff" font-weight="bold" text-anchor="middle">!</text><text x="484.5" y="354" font-size="7.3" fill="#fff" textLength="158.5" lengthAdjust="spacingAndGlyphs">Nat Dyn, Adv Clipper and FM used but not registered</text><text x="157.8" y="376.3" font-size="7.5" fill="#000" textLength="5.8" lengthAdjust="spacingAndGlyphs">In</text><text x="155.2" y="396" font-size="7.5" fill="#000" textLength="11.5" lengthAdjust="spacingAndGlyphs">Out</text><pattern id="gtx" x="178" y="0" width="2.500" height="8" patternUnits="userSpaceOnUse"><rect x="0" y="0" width="0.800" height="8" fill="#000" fill-opacity="0.090"/></pattern><rect x="177" y="365.8" width="505" height="16.2" fill="#0a0a0a"/><rect x="178" y="366.6" width="503" height="6.5" fill="#484848"/><rect x="178" y="366.6" width="409" height="6.5" fill="#0a900a"/><rect x="178" y="366.6" width="503" height="6.5" fill="url(#gtx)"/><rect x="678.3" y="366.6" width="2" height="6.5" fill="#a4a4a4"/><rect x="676.5" y="366.6" width="1.8" height="6.5" fill="#2a2a2a"/><rect x="178" y="374.45" width="503" height="6.5" fill="#484848"/><rect x="178" y="374.45" width="397.5" height="6.5" fill="#0a900a"/><rect x="178" y="374.45" width="503" height="6.5" fill="url(#gtx)"/><rect x="678.3" y="374.45" width="2" height="6.5" fill="#a4a4a4"/><rect x="676.5" y="374.45" width="1.8" height="6.5" fill="#2a2a2a"/><rect x="177" y="385.7" width="505" height="16.2" fill="#0a0a0a"/><rect x="178" y="386.5" width="503" height="6.5" fill="#484848"/><rect x="178" y="386.5" width="423" height="6.5" fill="#0a900a"/><rect x="601" y="386.5" width="72" height="6.5" fill="#94900e"/><rect x="178" y="386.5" width="503" height="6.5" fill="url(#gtx)"/><rect x="678.3" y="386.5" width="2" height="6.5" fill="#a4a4a4"/><rect x="676.5" y="386.5" width="1.8" height="6.5" fill="#2a2a2a"/><rect x="178" y="394.35" width="503" height="6.5" fill="#484848"/><rect x="178" y="394.35" width="423" height="6.5" fill="#0a900a"/><rect x="601" y="394.35" width="74.5" height="6.5" fill="#94900e"/><rect x="178" y="394.35" width="503" height="6.5" fill="url(#gtx)"/><rect x="678.3" y="394.35" width="2" height="6.5" fill="#a4a4a4"/><rect x="676.5" y="394.35" width="1.8" height="6.5" fill="#2a2a2a"/><rect x="533.5" y="410.5" width="44" height="14" fill="#e1e1e1" stroke="#0078d7" stroke-width="1.4"/><text x="555.5" y="420.3" font-size="7.5" fill="#111" text-anchor="middle" textLength="9" lengthAdjust="spacingAndGlyphs">OK</text><rect x="584.0" y="410.5" width="44" height="14" fill="#e1e1e1" stroke="#adadad" stroke-width="1"/><text x="606.0" y="420.3" font-size="7.5" fill="#111" text-anchor="middle" textLength="16" lengthAdjust="spacingAndGlyphs">Apply</text><rect x="634.5" y="410.5" width="44" height="14" fill="#e1e1e1" stroke="#adadad" stroke-width="1"/><text x="656.5" y="420.3" font-size="7.5" fill="#111" text-anchor="middle" textLength="20" lengthAdjust="spacingAndGlyphs">Cancel</text></svg></body></html>
